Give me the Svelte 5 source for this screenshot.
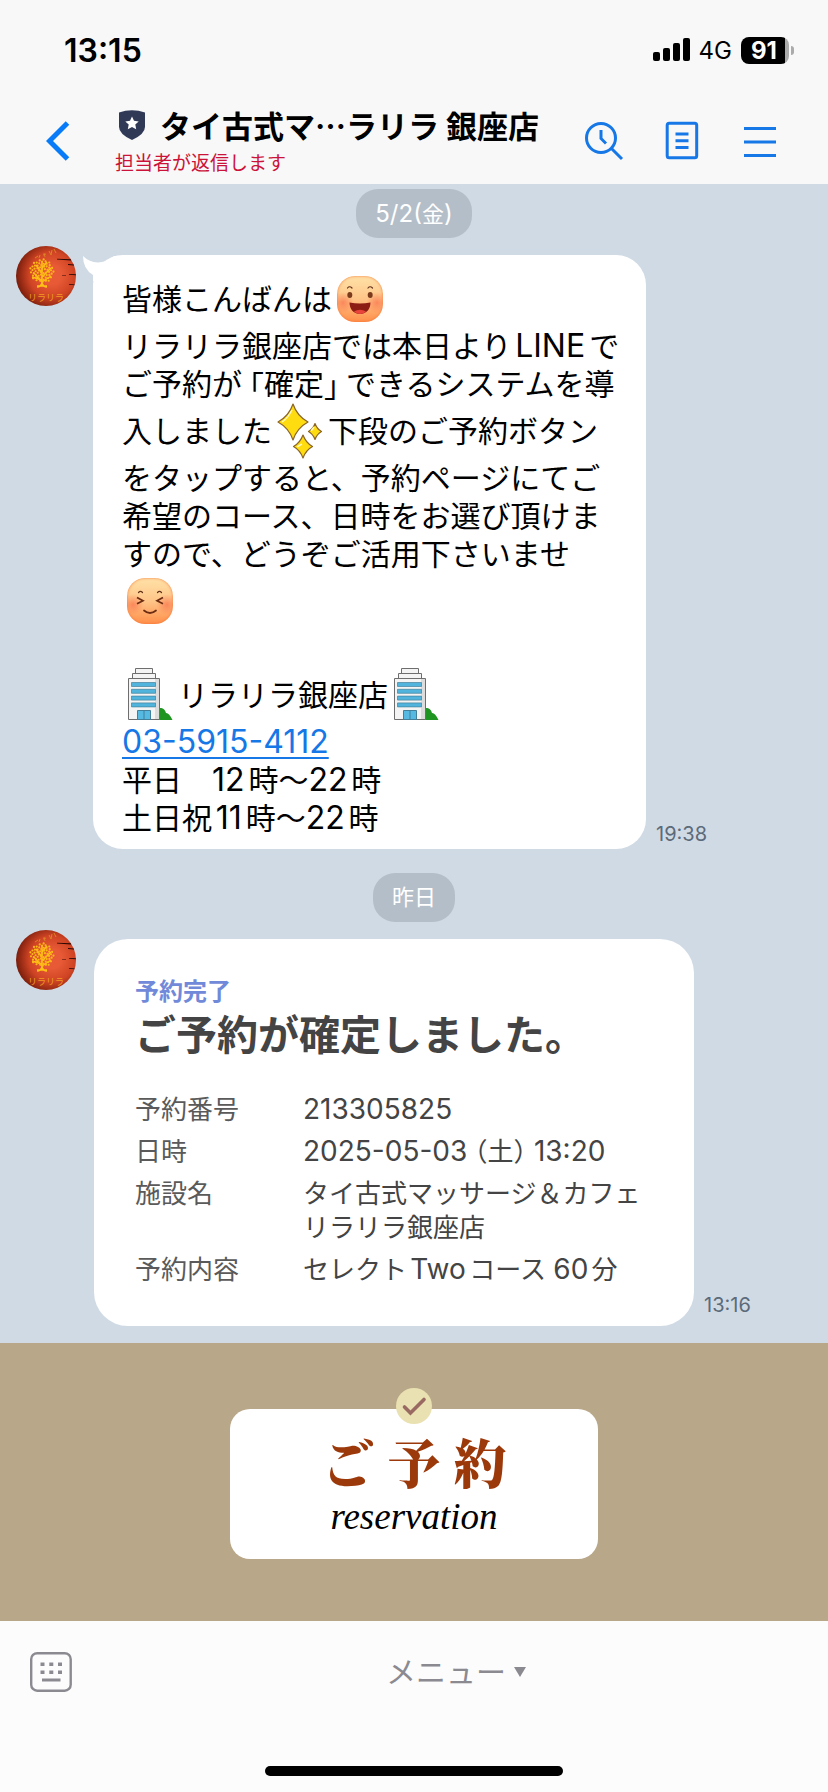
<script lang="ts">
  type Token = { text?: string; bracket?: string; link?: string; emoji?: 'smile' | 'squint' | 'sparkle' | 'building' };

  const lines: Token[][] = [
    [{ text: '皆様こんばんは' }, { emoji: 'smile' }],
    [{ text: 'リラリラ銀座店では本日よりLINEで' }],
    [{ text: 'ご予約が' }, { bracket: '「' }, { text: '確定' }, { bracket: '」' }, { text: 'できるシステムを導' }],
    [{ text: '入しました' }, { emoji: 'sparkle' }, { text: '下段のご予約ボタン' }],
    [{ text: 'をタップすると、予約ページにてご' }],
    [{ text: '希望のコース、日時をお選び頂けま' }],
    [{ text: 'すので、どうぞご活用下さいませ' }],
    [{ emoji: 'squint' }],
    [],
    [{ emoji: 'building' }, { text: 'リラリラ銀座店' }, { emoji: 'building' }],
    [{ link: '03-5915-4112' }],
    [{ text: '平日　12時〜22時' }],
    [{ text: '土日祝11時〜22時' }],
  ];

  const foliage = Array.from({ length: 60 }, (_, i) => {
    const angle = i * 2.4;
    const radius = Math.sqrt(i / 60);
    return { x: 26 + Math.cos(angle) * radius * 12, y: 25 + Math.sin(angle) * radius * 12 };
  });

  // Latin runs are set slightly larger than the kana and kanji around them.
  const runs = (text: string) => text.split(/([0-9A-Za-z:/()-]+)/).filter(Boolean);
  const isLatin = (run: string) => /^[0-9A-Za-z:/()-]/.test(run);
</script>

{#snippet mixed(text: string)}
  {#each runs(text) as run}{#if isLatin(run)}<span class="latin">{run}</span>{:else}{run}{/if}{/each}
{/snippet}

{#snippet avatar()}
  <span class="avatar">
    <svg viewBox="0 0 60 60" role="img" aria-label="リラリラ">
      <path d="M41 12.800 55 13.200v1.200l-14-.8zM52 18l6 .6v.9l-6-.6zM53 28l7 .2v1l-7-.4zM46 29h4v.5h-4zM53 38l6 .4v.8l-6-.4z" fill="#2c0804" />
      <path d="m19 12 3-2m1 2 1-3m3 0 3-1m-2-1 1 4m4-6 2 4m1-5-1 5m3-6 2 4" fill="none" stroke="#dc8324" stroke-width="1" />
      <g fill="none" stroke="#ffc018">
        <path d="M26 39V15m0 21-8-9m8 4 9-9m-9 5-6-8m6 3 5-6m-5 20 9-6m-9 4-10-3" stroke-width="1.500" />
        <path d="M26 37c-1 3-3 4-5 4m5-4c1 3 3 4 5 4m-10-1h10" stroke-width="1.600" />
      </g>
      {#each foliage as leaf}
        <circle cx={leaf.x} cy={leaf.y} r="1.1" fill="#fcb814" />
      {/each}
      <text x="30" y="55" text-anchor="middle">リラリラ</text>
    </svg>
  </span>
{/snippet}

{#snippet emoji(kind: Token['emoji'])}
  <span class="emoji">
    {#if kind === 'smile' || kind === 'squint'}
      <span class="face">
        <svg viewBox="0 0 46 46" aria-hidden="true">
          {#if kind === 'smile'}
            <path d="M10.500 12q2-2.500 4.500 0m16 0q2-2.500 4.500 0" fill="none" stroke="#63331a" stroke-width="1.200" stroke-linecap="round" />
            <ellipse cx="12.800" cy="19" rx="2.500" ry="3" fill="#7a3b1c" />
            <ellipse cx="33.200" cy="19" rx="2.500" ry="3" fill="#7a3b1c" />
            <path d="M12.500 26.500q10.500 2 21 0c0 6.500-4 11.500-10.500 11.500s-10.500-5-10.500-11.500z" fill="#8c1d14" />
            <path d="M17 35.500q6-3.500 12 0-2.500 2.500-6 2.500t-6-2.500z" fill="#e8443c" />
          {:else}
            <path d="M11.500 14.500q2-2.200 4 0m15 0q2-2.200 4 0" fill="none" stroke="#63331a" stroke-width="1.200" stroke-linecap="round" />
            <path d="m10 19.500 6 3.300-6 3m26-6.300-6 3.300 6 3" fill="none" stroke="#6b2c13" stroke-width="1.700" />
            <path d="M17 32.500q6 5 12 0" fill="none" stroke="#6b2c13" stroke-width="1.700" stroke-linecap="round" />
          {/if}
        </svg>
      </span>
    {:else if kind === 'sparkle'}
      <svg viewBox="0 0 56 56" aria-hidden="true">
        <g fill="#ffdc10" stroke="#8a6426" stroke-width="1.200" stroke-linejoin="round">
          <path d="M21 1q4 12 15 18-11 6-15 18-4-12-15-18 11-6 15-18z" />
          <path d="M43 20.500q2 5.500 6.500 8-4.500 2.500-6.500 8-2-5.500-6.500-8 4.500-2.500 6.500-8z" />
          <path d="M31 32q3 8 9.500 11.500-6.500 3.500-9.500 11.500-3-8-9.500-11.500 6.500-3.500 9.500-11.500z" />
        </g>
        <path d="M20 7q-4 8-10 12m20 22q-2 1-5 3m17-20-3 4" fill="none" stroke="#fff8c0" stroke-width="1.500" />
      </svg>
    {:else}
      <svg viewBox="0 0 56 56" aria-hidden="true">
        <path d="M36 43c3-4 7-1 8 3 3 0 5 4 6.500 7H36z" fill="#1d9520" />
        <g fill="#f4f4f4" stroke="#6e6e6e" stroke-width="1">
          <path d="M13.500 1.500h17v5h-17zM10.500 6.500h23v5h-23zM6.500 11.500h31v41h-31z" />
        </g>
        <path d="M33 12h4v40h-4z" fill="#dcdcdc" />
        <path d="M9.500 15.500h24v4h-24zm0 6.800h24v4h-24zm0 6.800h24v4h-24zm0 6.800h24v4h-24z" fill="#51b4dc" stroke="#437f99" stroke-width=".7" />
        <path d="M15.500 43.500h13v9h-13zM22 43.500v9" fill="#55b9e2" stroke="#437f99" />
      </svg>
    {/if}
  </span>
{/snippet}

<div class="phone" lang="ja">
  <header>
    <div class="status">
      <time>13:15</time>
      <div class="status__right">
        <svg width="37" height="24" viewBox="0 0 37 24" aria-hidden="true">
          <rect x="0" y="14" width="7" height="9" rx="2" />
          <rect x="10" y="10" width="7" height="13" rx="2" />
          <rect x="20" y="5" width="7" height="18" rx="2" />
          <rect x="30" y="0" width="7" height="23" rx="2" />
        </svg>
        <span class="network">4G</span>
        <span class="battery"><span class="battery__level">91</span></span>
      </div>
    </div>

    <nav>
      <button class="back" type="button" aria-label="戻る">
        <svg width="24" height="40" viewBox="0 0 24 40"><path d="M21.500 2 3.500 20l18 18" fill="none" stroke="#087bf8" stroke-width="5" /></svg>
      </button>
      <div class="account">
        <div class="account__name">
          <svg width="26" height="30" viewBox="0 0 26 30" aria-hidden="true">
            <path d="M0 2.500Q13-2.200 26 2.500V17q0 7-13 13Q0 24 0 17z" fill="#303a57" />
            <path d="m13 6.500 2 4.300 4.700.6-3.400 3.200.9 4.700-4.200-2.300-4.200 2.300.9-4.700-3.400-3.200 4.700-.6z" fill="#fff" />
          </svg>
          <h1>タイ古式マ…ラリラ 銀座店</h1>
        </div>
        <p>担当者が返信します</p>
      </div>
      <div class="actions">
        <button type="button" aria-label="検索">
          <svg width="40" height="40" viewBox="0 0 40 40">
            <circle cx="17" cy="17" r="14.500" />
            <path d="M17 9v8.500l5 5M27.500 27.500 38 38" />
          </svg>
        </button>
        <button type="button" aria-label="ノート">
          <svg width="40" height="40" viewBox="0 0 40 40">
            <rect x="5.200" y="2.200" width="29.500" height="34.500" rx="2" />
            <path d="M13.500 13h13m-13 6.800h13m-13 6.700h13" />
          </svg>
        </button>
        <button type="button" aria-label="メニュー">
          <svg width="40" height="40" viewBox="0 0 40 40"><path d="M4 7.500h32M4 21h32M4 34.500h32" /></svg>
        </button>
      </div>
    </nav>
  </header>

  <main>
    <p class="date">{@render mixed('5/2(金)')}</p>
    <article class="message">
      {@render avatar()}
      <div class="bubble">
        <svg class="bubble__tail" width="40" height="26" viewBox="0 0 40 26" aria-hidden="true">
          <path d="M0 1q8 8 19 6 6-1 12-6l9 0v25H10V20Q0 14 0 1z" fill="#fff" />
        </svg>
        {#each lines as line}
          <div class="line" class:line--tall={line.some((token) => token.emoji)}>
            {#each line as token}
              {#if token.emoji}
                {@render emoji(token.emoji)}
              {:else if token.link}
                <a class="latin" href="tel:{token.link}">{token.link}</a>
              {:else if token.bracket}
                <span class="bracket" class:bracket--close={token.bracket === '」'}>{token.bracket}</span>
              {:else}
                <span>{@render mixed(token.text ?? '')}</span>
              {/if}
            {/each}
          </div>
        {/each}
      </div>
      <time>19:38</time>
    </article>

    <p class="date date--next">昨日</p>
    <article class="message message--card">
      {@render avatar()}
      <div class="card">
        <p class="card__label">予約完了</p>
        <h2>ご予約が確定しました。</h2>
        <dl>
          <dt>予約番号</dt>
          <dd>{@render mixed('213305825')}</dd>
          <dt>日時</dt>
          <dd>{@render mixed('2025-05-03')} <span class="half">（</span>土<span class="half">）</span> {@render mixed('13:20')}</dd>
          <dt>施設名</dt>
          <dd>タイ古式マッサージ＆カフェ<br />リラリラ銀座店</dd>
          <dt>予約内容</dt>
          <dd>{@render mixed('セレクトTwoコース 60分')}</dd>
        </dl>
      </div>
      <time>13:16</time>
    </article>
  </main>

  <section class="rich-menu">
    <button class="reserve" type="button">
      <svg class="reserve__check" width="36" height="36" viewBox="0 0 36 36" aria-hidden="true">
        <circle cx="18" cy="18" r="18" fill="#e9e1b1" />
        <path d="m8.500 19 6 6L28 11.500" fill="none" stroke="#986a62" stroke-width="3.600" stroke-linecap="round" />
      </svg>
      <span class="reserve__title">ご 予 約</span>
      <span class="reserve__sub">reservation</span>
    </button>
  </section>

  <footer>
    <div class="toolbar">
      <button class="keyboard" type="button" aria-label="キーボード">
        <svg width="42" height="40" viewBox="0 0 42 40">
          <rect x="1.200" y="1.200" width="39.500" height="37.500" rx="6" fill="none" stroke="#8b8a91" stroke-width="2.400" />
          <path d="M10.500 10.500h4v3.500h-4zm8.800 0h4v3.500h-4zm8.700 0h4v3.500h-4zM10.500 18.500h4V22h-4zm8.800 0h4V22h-4zm8.700 0h4V22h-4zM12 26.500h18.500v3H12z" fill="#8b8a91" />
        </svg>
      </button>
      <button class="menu" type="button">
        <span>メニュー</span>
        <svg width="12" height="10" viewBox="0 0 12 10" aria-hidden="true"><path d="M0 0h12L6 10z" fill="#8b8a91" /></svg>
      </button>
    </div>
    <div class="home-bar"></div>
  </footer>
</div>

<style>
  :global(body) {
    background: #fcfcfc;
  }

  .phone {
    font-family: Inter, 'Noto Sans CJK JP', sans-serif;
    color: #000;
    text-autospace: normal;
  }

  p,
  h1,
  h2,
  dl,
  dd {
    margin: 0;
  }

  button {
    padding: 0;
    border: 0;
    background: none;
    font: inherit;
    color: inherit;
    cursor: pointer;
  }

  svg {
    display: block;
    flex: none;
  }

  header {
    background: #f8f8f8;
  }

  .status {
    display: flex;
    align-items: center;
    justify-content: space-between;
    height: 100px;
    padding: 0 34px 0 64px;
    box-sizing: border-box;
  }

  .status time {
    font-size: 32px;
    font-weight: 600;
  }

  .status__right {
    display: flex;
    align-items: center;
    gap: 9px;
  }

  .network {
    font-size: 24px;
  }

  .battery {
    display: flex;
    align-items: center;
    gap: 2px;
  }

  .battery__level {
    width: 48px;
    height: 27px;
    box-sizing: border-box;
    padding-right: 2px;
    border-radius: 8px;
    background: linear-gradient(90deg, #000 44px, #ababab 44px);
    color: #fff;
    font-size: 24px;
    font-weight: 700;
    line-height: 27px;
    text-align: center;
  }

  .battery::after {
    content: '';
    width: 3px;
    height: 9px;
    border-radius: 0 4px 4px 0;
    background: #ababab;
  }

  nav {
    display: flex;
    align-items: center;
    height: 84px;
    box-sizing: border-box;
    padding: 0 48px 2px 46px;
  }

  .account {
    flex: 1;
    margin-left: 45px;
  }

  .account__name {
    display: flex;
    align-items: center;
    gap: 15px;
    margin-bottom: 2px;
    padding-left: 4px;
  }

  h1 {
    font-family: 'Noto Sans CJK JP', sans-serif;
    font-size: 31px;
    font-weight: 700;
    line-height: 44px;
    white-space: nowrap;
  }

  .account p {
    color: #cb1238;
    font-size: 19px;
    line-height: 30px;
  }

  .actions {
    display: flex;
    gap: 38px;
  }

  .actions svg {
    fill: none;
    stroke: #1677e6;
    stroke-width: 3;
  }

  main {
    display: flex;
    flex-direction: column;
    padding: 5px 16px 17px;
    background: #d0dae4;
  }

  .date {
    align-self: center;
    height: 49px;
    margin-bottom: 8px;
    padding: 0 19px;
    border-radius: 22px;
    background: #b4bec9;
    color: #fff;
    font-size: 22px;
    line-height: 49px;
  }

  .date .latin {
    font-size: 24px;
  }

  .date--next {
    margin-top: 24px;
  }

  .message {
    display: flex;
    align-items: flex-start;
  }

  .message time {
    align-self: flex-end;
    margin-left: 10px;
    color: #5c6a79;
    font-size: 20px;
    line-height: 30px;
  }

  .message--card time {
    padding-bottom: 6px;
  }

  .avatar {
    flex: none;
    width: 60px;
    height: 60px;
    margin-right: 17px;
    overflow: hidden;
    border-radius: 50%;
    background: radial-gradient(circle at 60% 48%, #e85a36 0 20%, #cf4424 48%, #84220f 72%, #3c0a06 95%);
  }

  .avatar text {
    fill: #f09a22;
    font-family: 'Noto Sans CJK JP', sans-serif;
    font-size: 9px;
  }

  .bubble {
    position: relative;
    flex: 0 1 553px;
    box-sizing: border-box;
    margin-top: 9px;
    padding: 16px 26px 12px 29px;
    border-radius: 30px;
    background: #fff;
    font-size: 30px;
  }

  .bubble__tail {
    position: absolute;
    top: 0;
    left: -10px;
  }

  .line {
    position: relative;
    display: flex;
    align-items: center;
    height: 38px;
    line-height: 38px;
    white-space: nowrap;
  }

  .line--tall {
    height: 56px;
  }

  .line .latin {
    font-size: 32px;
  }

  .line a {
    color: #1677e6;
    text-decoration-thickness: 2px;
    text-underline-offset: 4px;
  }

  .half,
  .bracket {
    font-family: 'Noto Sans CJK JP', sans-serif;
    font-feature-settings: 'halt';
    line-height: 1;
  }

  .bracket {
    padding-left: 7px;
  }

  .bracket--close {
    padding: 0 7px 0 0;
  }

  .emoji {
    display: grid;
    place-items: center;
    width: 56px;
    height: 56px;
  }

  .face {
    width: 46px;
    height: 46px;
    border-radius: 18px;
    background:
      radial-gradient(circle at 13% 58%, #f8704bb0 0, transparent 22%),
      radial-gradient(circle at 87% 58%, #f8704bb0 0, transparent 22%),
      linear-gradient(#ffe2a8, #ffc588 50%, #ff8f4a);
    box-shadow: inset 0 0 3px #f2743a;
  }

  .card {
    flex: 0 1 600px;
    box-sizing: border-box;
    margin: 9px 0 0 1px;
    padding: 36px 41px 39px;
    border-radius: 34px;
    background: #fff;
    color: #444;
  }

  .card__label {
    color: #7189d9;
    font-size: 24px;
    font-weight: 600;
    line-height: 34px;
  }

  h2 {
    font-size: 41px;
    font-weight: 700;
    line-height: 52px;
    white-space: nowrap;
  }

  dl {
    display: grid;
    grid-template-columns: 168px 1fr;
    row-gap: 8px;
    margin-top: 32px;
    font-size: 26px;
    line-height: 34px;
    white-space: nowrap;
  }

  dl .latin {
    font-size: 28px;
    line-height: 1;
  }

  dt {
    color: #5a5a5a;
  }

  .rich-menu {
    display: flex;
    justify-content: center;
    padding: 66px 24px 62px;
    background: #b8a788;
  }

  .reserve {
    position: relative;
    display: flex;
    flex: 0 1 368px;
    flex-direction: column;
    align-items: center;
    height: 150px;
    padding-top: 24px;
    border-radius: 20px;
    background: #fff;
  }

  .reserve__check {
    position: absolute;
    top: -21px;
    left: calc(50% - 18px);
  }

  .reserve__title {
    margin-bottom: 8px;
    color: #9c390b;
    font-family: 'Noto Serif CJK JP', 'Noto Sans CJK JP', serif;
    font-size: 53px;
    font-weight: 900;
    line-height: 56px;
  }

  .reserve__sub {
    color: #000;
    font-family: 'Liberation Serif', serif;
    font-size: 37px;
    font-style: italic;
    line-height: 40px;
  }

  footer {
    padding-bottom: 16px;
    background: #fcfcfc;
  }

  .toolbar {
    display: flex;
    align-items: center;
    height: 102px;
  }

  .keyboard {
    margin: 0 12px 0 30px;
  }

  .menu {
    display: flex;
    flex: 1;
    align-items: center;
    justify-content: center;
    gap: 8px;
    color: #8b8a91;
    font-size: 30px;
  }

  .menu span {
    padding-bottom: 4px;
  }

  .home-bar {
    width: 36%;
    height: 10px;
    margin: 43px auto 0;
    border-radius: 5px;
    background: #000;
  }
</style>
